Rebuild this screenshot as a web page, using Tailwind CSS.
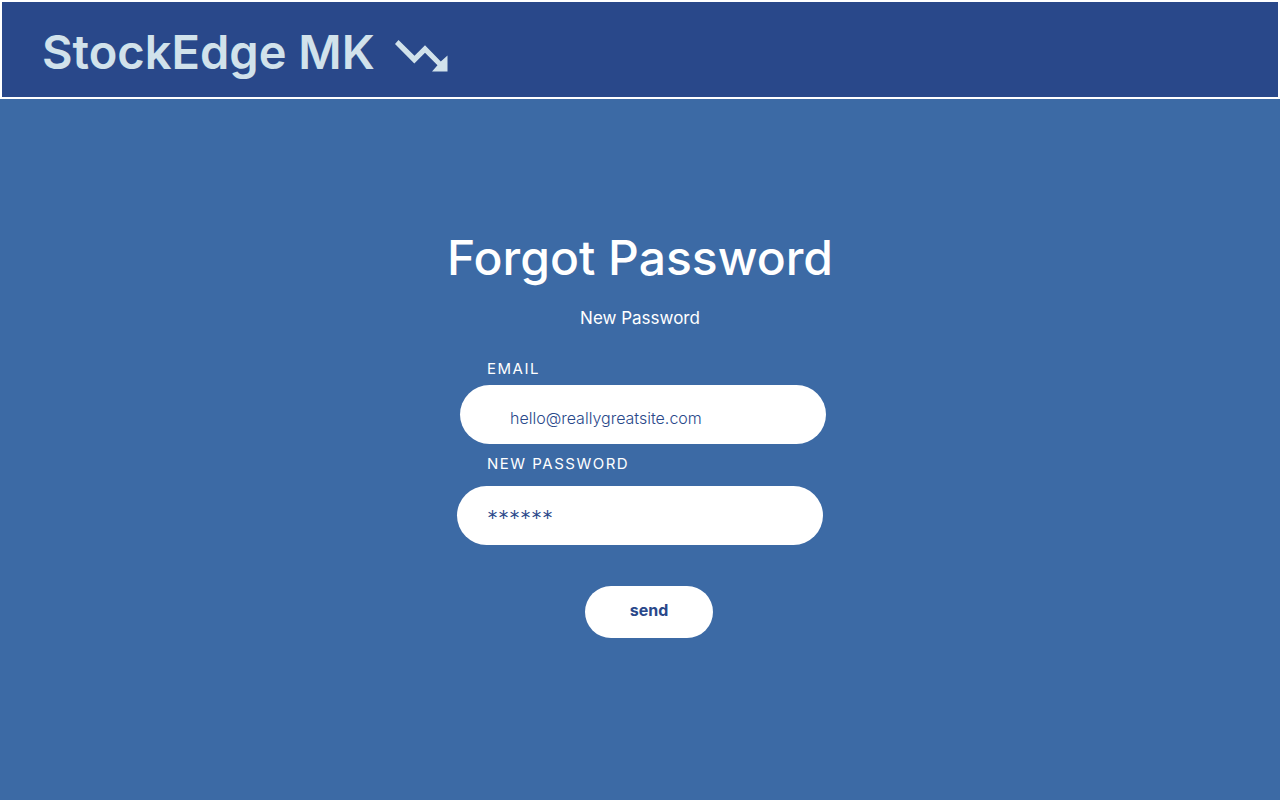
<!DOCTYPE html>
<html lang="en">
<head>
<meta charset="utf-8">
<meta name="viewport" content="width=device-width, initial-scale=1">
<title>StockEdge MK – Forgot Password</title>
<script src="https://cdn.jsdelivr.net/npm/@tailwindcss/browser@4"></script>
</head>
<body class="min-h-screen bg-[#3c6aa5] font-['Inter',sans-serif] text-white">
<header class="flex h-[99px] items-center gap-5 border-2 border-white bg-[#29488a] px-10 pt-1 text-[#d1e2eb]">
  <span class="text-[47px] leading-none font-semibold">StockEdge MK</span>
  <svg class="mt-2 h-8 w-[53px]" viewBox="0 0 53 32" fill="currentColor" aria-hidden="true">
    <path d="M3.5 0 19.5 15.8 30 5.2 45.8 21.5 52.5 15.5V31.5H37L42.5 25.2 30 12.7 19.3 23.6 0 4Z"/>
  </svg>
</header>
<main class="flex flex-col items-center px-4 pt-[129px]">
  <h1 class="text-center text-5xl leading-[60px] font-medium">Forgot Password</h1>
  <p class="mt-4 text-[17px] leading-7">New Password</p>
  <form class="mt-[25px] flex w-full max-w-[366px] flex-col">
    <label for="email" class="ml-[30px] text-[15px] leading-6 tracking-widest">EMAIL</label>
    <input id="email" type="email" value="hello@reallygreatsite.com" class="mt-1 ml-[3px] h-[59px] w-full rounded-full bg-white px-[50px] pt-1.5 text-base font-light text-[#29488a]">
    <label for="password" class="mt-2 ml-[30px] text-[15px] leading-6 tracking-widest">NEW PASSWORD</label>
    <input id="password" type="text" autocomplete="off" value="******" class="mt-[10px] h-[59px] w-full rounded-full bg-white px-[30px] pt-1 text-[22px] font-light text-[#29488a]">
    <button type="submit" class="mt-[41px] ml-[128px] h-[52px] w-[128px] rounded-full bg-white pb-1 text-base font-bold text-[#29488a]">send</button>
  </form>
</main>
</body>
</html>
